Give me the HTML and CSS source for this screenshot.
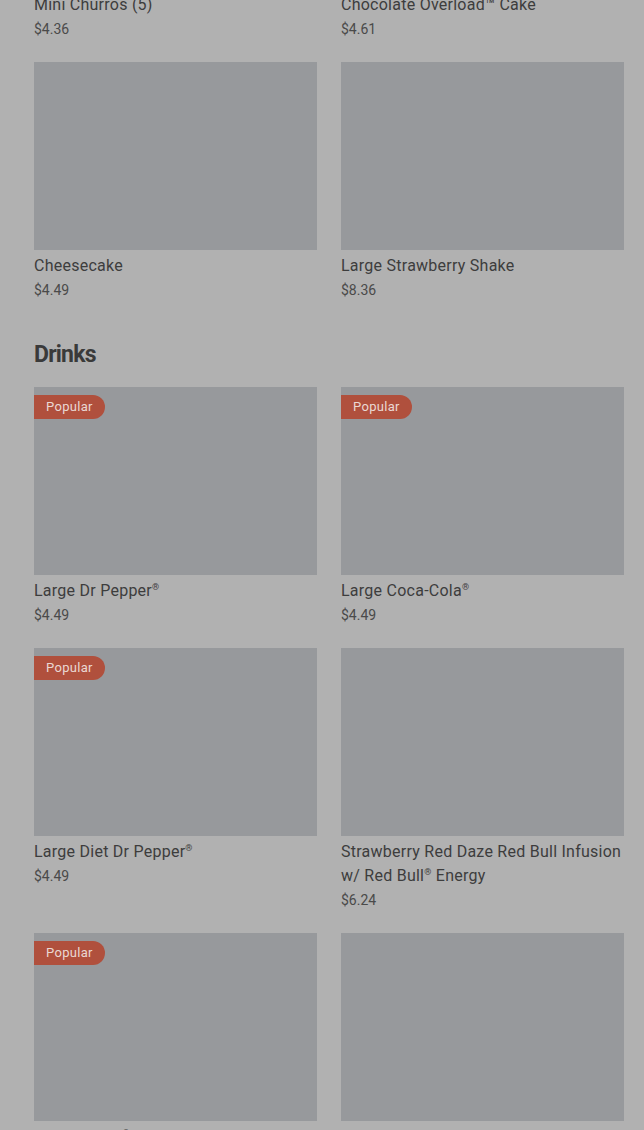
FILE: index.html
```html
<!DOCTYPE html>
<html>
<head>
    <title>Menu</title>
    <link rel="stylesheet" href="styles.css">
</head>
<body>
    <main class="menu">
        <section class="category">
            <div class="item-grid">
                <div class="item">
                    <div class="item-photo"></div>
                    <div class="item-name">Mini Churros (5)</div>
                    <div class="item-price">$4.36</div>
                </div>
                <div class="item">
                    <div class="item-photo"></div>
                    <div class="item-name">Chocolate Overload™ Cake</div>
                    <div class="item-price">$4.61</div>
                </div>
                <div class="item">
                    <div class="item-photo"></div>
                    <div class="item-name">Cheesecake</div>
                    <div class="item-price">$4.49</div>
                </div>
                <div class="item">
                    <div class="item-photo"></div>
                    <div class="item-name">Large Strawberry Shake</div>
                    <div class="item-price">$8.36</div>
                </div>
            </div>
        </section>

        <section class="category">
            <h2 class="category-title">Drinks</h2>
            <div class="item-grid">
                <div class="item">
                    <div class="item-photo"><span class="badge">Popular</span></div>
                    <div class="item-name">Large Dr Pepper<sup>®</sup></div>
                    <div class="item-price">$4.49</div>
                </div>
                <div class="item">
                    <div class="item-photo"><span class="badge">Popular</span></div>
                    <div class="item-name">Large Coca-Cola<sup>®</sup></div>
                    <div class="item-price">$4.49</div>
                </div>
                <div class="item">
                    <div class="item-photo"><span class="badge">Popular</span></div>
                    <div class="item-name">Large Diet Dr Pepper<sup>®</sup></div>
                    <div class="item-price">$4.49</div>
                </div>
                <div class="item">
                    <div class="item-photo"></div>
                    <div class="item-name">Strawberry Red Daze Red Bull Infusion w/ Red Bull<sup>®</sup> Energy</div>
                    <div class="item-price">$6.24</div>
                </div>
                <div class="item">
                    <div class="item-photo"><span class="badge">Popular</span></div>
                    <div class="item-name">Large Sprite<sup>®</sup></div>
                    <div class="item-price">$4.49</div>
                </div>
                <div class="item">
                    <div class="item-photo"></div>
                    <div class="item-name">Large Lemonade</div>
                    <div class="item-price">$4.49</div>
                </div>
            </div>
        </section>
    </main>
</body>
</html>
```

FILE: styles.css
```css
body {
    background-color: #b1b1b1;
    color: #3c3c3c;
    font-family: Roboto, "Liberation Sans", sans-serif;
    margin: 0;
    overflow: hidden;
}

.menu {
    margin-top: -199px;
    padding: 0 20px 0 34px;
}

.category {
    margin-bottom: 39px;
}

.category-title {
    margin: 0 0 18px;
    font-size: 23px;
    line-height: 28px;
    font-weight: 700;
    letter-spacing: -0.8px;
    color: #3a3a3a;
}

.item-grid {
    display: grid;
    grid-template-columns: 1fr 1fr;
    column-gap: 24px;
    row-gap: 21px;
}

.item-photo {
    position: relative;
    height: 188px;
    background-color: #97999c;
}

.badge {
    position: absolute;
    top: 8px;
    left: 0;
    height: 24px;
    line-height: 24px;
    padding: 0 12px;
    background-color: #b0503d;
    color: #ead8d3;
    font-size: 13px;
    letter-spacing: 0.3px;
    border-radius: 0 12px 12px 0;
}

.item-name {
    margin-top: 4px;
    font-size: 16px;
    line-height: 24px;
    letter-spacing: 0.25px;
    color: #3d3d3d;
}

.item-name sup {
    font-size: 9px;
    line-height: 0;
    vertical-align: 6px;
}

.item-price {
    font-size: 14px;
    line-height: 24px;
    color: #4a4a4a;
}
```
